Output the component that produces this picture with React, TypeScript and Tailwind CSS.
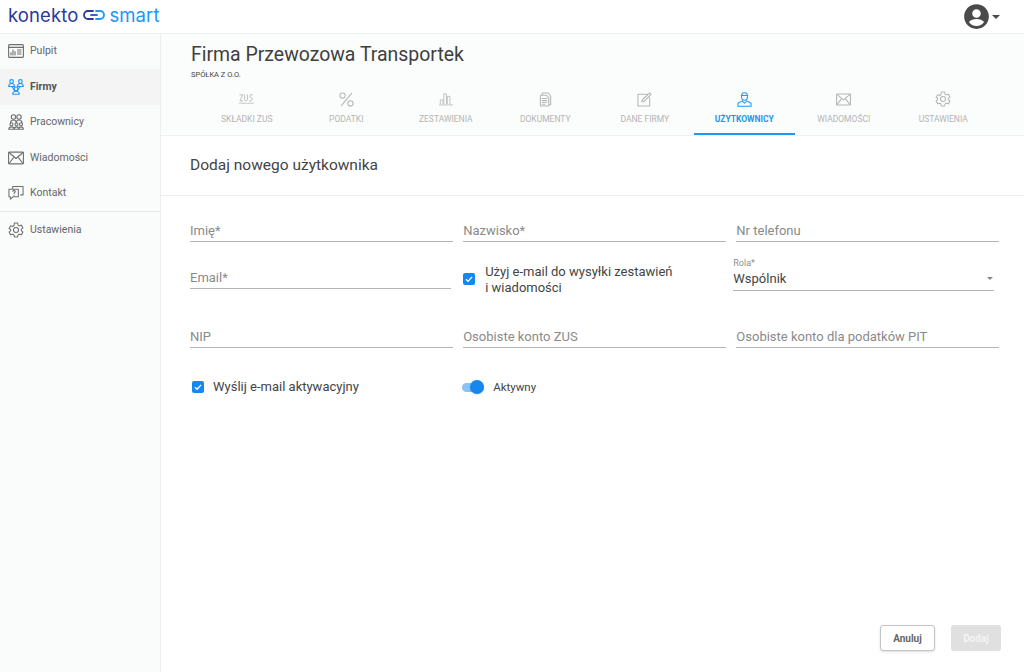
import React from "react";

type IconProps = { className?: string };

const base = { fill: "none", stroke: "currentColor", strokeWidth: 1.1, strokeLinecap: "round" as const, strokeLinejoin: "round" as const };

const Pulpit = ({ className }: IconProps) => (
  <svg viewBox="0 0 16 14" className={className} {...base}>
    <rect x="0.6" y="0.6" width="14.8" height="12.8" rx="1" />
    <path d="M0.6 3.4h14.8M3 11V8.5M5 11V6M7 11V7.5M9.5 6h3.5M9.5 8h3.5M9.5 10h3.5" />
  </svg>
);
const People = ({ className }: IconProps) => (
  <svg viewBox="0 0 16 16" className={className} {...base}>
    <circle cx="3.6" cy="2.4" r="1.8" />
    <circle cx="12.4" cy="2.4" r="1.8" />
    <circle cx="8" cy="9.8" r="1.8" />
    <path d="M.7 7.500c0-2 1-3 2.900-3s2.900 1 2.900 3zM9.500 7.500c0-2 1-3 2.900-3s2.900 1 2.900 3zM4.700 15.300c0-2 1.300-3 3.300-3s3.300 1 3.300 3zM6.500 11.500L4 7.600M9.500 11.500L12 7.600" />
  </svg>
);
const Workers = ({ className }: IconProps) => (
  <svg viewBox="0 0 16 16" className={className} {...base}>
    <circle cx="5.500" cy="3" r="2.200" />
    <circle cx="11" cy="3" r="2.200" />
    <path d="M2.500 9c0-2 1.200-3 3-3s2.700 1 2.700 3M8.200 9c0-2 1-3 2.800-3s3 1 3 3" />
    <circle cx="3.500" cy="10.200" r="1.500" />
    <circle cx="8.500" cy="10.200" r="1.500" />
    <circle cx="13" cy="10.200" r="1.500" />
    <path d="M.8 15.300c0-1.500 1-2.400 2.700-2.400s2.700.9 2.700 2.400zM6.200 15.300c0-1.500.9-2.400 2.300-2.400s2.300.9 2.300 2.400zM10.800 15.300c0-1.500.8-2.400 2.200-2.400s2.300.9 2.300 2.400z" />
  </svg>
);
const Mail = ({ className }: IconProps) => (
  <svg viewBox="0 0 16 13" className={className} {...base}>
    <rect x="0.6" y="0.6" width="14.8" height="11.8" rx="0.8" />
    <path d="M1 1l7 6 7-6M1 12l5-6.400M15 12l-5-6.400" />
  </svg>
);
const Contact = ({ className }: IconProps) => (
  <svg viewBox="0 0 17 16" className={className} {...base}>
    <path d="M5 3V1h11v9h-2.500M5 4H1v8h1.500v2.600L5.500 12H11V4z" />
    <path d="M5 6.200c.5-1 2.500-1 2.700.2.1.9-1.200 1.100-1.200 2.100M6.500 10.200v.1" />
  </svg>
);
const Gear = ({ className }: IconProps) => (
  <svg viewBox="0 0 24 24" className={className} fill="none" stroke="currentColor" strokeWidth={1.6} strokeLinejoin="round">
    <circle cx="12" cy="12" r="3.800" />
    <path d="M9.600 1.500h4.800l.7 3.200 1.800 1 3.100-1 2.400 4.200-2.400 2.200v1.800l2.400 2.200-2.400 4.200-3.100-1-1.800 1-.7 3.200H9.600l-.7-3.200-1.800-1-3.100 1-2.400-4.200 2.400-2.200v-1.800L1.600 9.900l2.400-4.200 3.100 1 1.800-1z" />
  </svg>
);
const Zus = ({ className }: IconProps) => (
  <svg viewBox="0 0 16 12" className={className} {...base} strokeWidth={0.9}>
    <path d="M1 1.500h3L1 8h3M6 1.500V6.500c0 2 3 2 3 0V1.500M14.500 1.500h-2c-1.500 0-1.500 3 .2 3 1.800 0 1.800 3.500 0 3.500H11M0.500 10.500c2-1 3 1 5 0s3 1 5 0 3 1 5 0" />
  </svg>
);
const Percent = ({ className }: IconProps) => (
  <svg viewBox="0 0 16 16" className={className} {...base}>
    <circle cx="3.800" cy="3.800" r="2.800" />
    <circle cx="12.200" cy="12.200" r="2.800" />
    <path d="M13.500 1.500L2.500 14.500" />
  </svg>
);
const Bars = ({ className }: IconProps) => (
  <svg viewBox="0 0 16 15" className={className} {...base} strokeWidth={0.9}>
    <path d="M1.500 13V8.500h3V13M5.500 13V1.500h3V13M9.500 13V4.500h3V13M.5 14.300h15" />
  </svg>
);
const Doc = ({ className }: IconProps) => (
  <svg viewBox="0 0 13 16" className={className} {...base}>
    <path d="M3 3V1h6l3 3v9.500h-2M1 3.500h6.500L10 6v9H1zM3 7h5M3 9h5M3 11h5M3 13h3" />
  </svg>
);
const Edit = ({ className }: IconProps) => (
  <svg viewBox="0 0 16 16" className={className} {...base}>
    <path d="M11 2.500H1v12.500h12.500V6M6 8l7.500-7 1.500 1.500L7.500 10l-2.500.5z" />
  </svg>
);
const Users = ({ className }: IconProps) => (
  <svg viewBox="0 0 16 16" className={className} {...base}>
    <path d="M4.800 4.500c0-2.300 1.300-3.800 3.200-3.800s3.200 1.500 3.200 3.800c0 2.500-1.300 4.300-3.200 4.300S4.800 7 4.800 4.500zM4.500 3.800h7M5.500 9.500L1 12v3.300h14V12l-4.500-2.500L8 12z" />
  </svg>
);

const Tab = ({ Icon, label, active, iconClass }: { Icon: React.FC<IconProps>; label: string; active?: boolean; iconClass: string }) => (
  <div className={`h-[55px] flex flex-col items-center border-b-2 ${active ? "w-[101.5px] -mx-[1px] border-[#2196f3] text-[#2196f3]" : "w-[99.5px] border-transparent text-[#b5b5b5]"}`}>
    <div className="h-[28px] mt-[5px] flex items-center justify-center">
      <Icon className={iconClass} />
    </div>
    <div className={`text-[8.500px] leading-[12px] ${active ? "font-bold" : ""}`}>{label}</div>
  </div>
);

const Side = ({ Icon, label, active }: { Icon: React.FC<IconProps>; label: string; active?: boolean }) => (
  <div className={`h-[35.5px] flex items-center pl-[8px] ${active ? "bg-[#f4f4f4]" : ""}`}>
    <div className={`w-[16px] flex justify-center ${active ? "text-[#2196f3]" : "text-[#6f6f6f]"}`}>
      <Icon className="w-[16px] h-[16px]" />
    </div>
    <span className={`ml-[6px] text-[10.500px] leading-none ${active ? "font-bold text-[#555]" : "text-[#666]"}`}>{label}</span>
  </div>
);

const Field = ({ label, className = "" }: { label: string; className?: string }) => (
  <div className={`h-[24px] pt-[2.5px] border-b border-[#b4b4b4] text-[13px] leading-[20px] text-[#8a8a8a] ${className}`}>{label}</div>
);

const Check = () => (
  <span className="w-[12px] h-[12px] rounded-[2px] bg-[#1488ee] flex items-center justify-center shrink-0">
    <svg viewBox="0 0 12 12" className="w-[10px] h-[10px]" fill="none" stroke="#fff" strokeWidth={1.600}>
      <path d="M2.300 6.200l2.600 2.500 4.800-5.200" />
    </svg>
  </span>
);

export default function App() {
  return (
    <div className="w-[1024px] h-[672px] overflow-hidden bg-white flex flex-col font-['Roboto',sans-serif]">
      <header className="h-[34px] shrink-0 flex items-center justify-between border-b border-[#f0f0f0] bg-white pl-[8px] pr-[24px] relative z-10">
        <div className="flex items-center font-['Inter',sans-serif] text-[18.500px] leading-none -mt-[3px]">
          <span className="text-[#2a3a9c] font-normal tracking-[0.1px]">konekto</span>
          <svg viewBox="0 0 22 10" className="w-[22px] h-[10px] ml-[5px]" fill="none" strokeWidth={1.800} strokeLinecap="round">
            <path d="M10 1H5a4 4 0 0 0 0 8h5" stroke="#2a3a9c" />
            <path d="M8 5h6" stroke="#2a6ac8" />
            <path d="M13 1h4a4 4 0 0 1 0 8h-4" stroke="#2196f3" />
          </svg>
          <span className="ml-[4px] text-[#2196f3] font-normal tracking-[0.1px]">smart</span>
        </div>
        <div className="flex items-center">
          <svg viewBox="0 0 24 24" className="w-[27px] h-[27px] text-[#4a4a4a]" fill="currentColor">
            <path d="M12 1C5.900 1 1 5.900 1 12s4.900 11 11 11 11-4.900 11-11S18.100 1 12 1zm0 4.500c2.100 0 3.800 1.700 3.800 3.800S14.100 13.100 12 13.100 8.200 11.400 8.200 9.300 9.900 5.500 12 5.500zm0 15c-2.800 0-5.300-1.400-6.700-3.600 1-1.700 4.400-2.600 6.700-2.600s5.700.9 6.700 2.600c-1.400 2.200-3.900 3.600-6.700 3.600z" />
          </svg>
          <span className="ml-[2px] w-0 h-0 border-x-[4.500px] border-x-transparent border-t-[4.500px] border-t-[#4a4a4a]" />
        </div>
      </header>
      <div className="flex flex-1 min-h-0">
        <aside className="w-[161px] shrink-0 bg-[#fafbfb] border-r border-[#eeeeee]">
          <div className="-mt-[0.5px]">
            <Side Icon={Pulpit} label="Pulpit" />
            <Side Icon={People} label="Firmy" active />
            <Side Icon={Workers} label="Pracownicy" />
            <Side Icon={Mail} label="Wiadomości" />
            <Side Icon={Contact} label="Kontakt" />
            <div className="border-t border-[#e8e8e8]" />
            <Side Icon={Gear} label="Ustawienia" />
          </div>
        </aside>
        <main className="flex-1 min-w-0 flex flex-col">
          <section className="h-[102px] shrink-0 bg-[#fbfcfc] border-b border-[#f0f0f0] relative">
            <h1 className="pl-[30px] pt-[8px] text-[19.450px] leading-[26px] text-[#3f3f3f]">Firma Przewozowa Transportek</h1>
            <div className="pl-[30px] mt-[2px] text-[7.500px] leading-[10px] text-[#444]">SPÓŁKA Z O.O.</div>
            <div className="flex pl-[36px]">
              <Tab Icon={Zus} label="SKŁADKI ZUS" iconClass="w-[15px] h-[12px]" />
              <Tab Icon={Percent} label="PODATKI" iconClass="w-[15px] h-[15px]" />
              <Tab Icon={Bars} label="ZESTAWIENIA" iconClass="w-[14px] h-[14px]" />
              <Tab Icon={Doc} label="DOKUMENTY" iconClass="w-[13px] h-[15px]" />
              <Tab Icon={Edit} label="DANE FIRMY" iconClass="w-[15px] h-[15px]" />
              <Tab Icon={Users} label="UŻYTKOWNICY" iconClass="w-[15px] h-[15px]" active />
              <Tab Icon={Mail} label="WIADOMOŚCI" iconClass="w-[15px] h-[13px]" />
              <Tab Icon={Gear} label="USTAWIENIA" iconClass="w-[16px] h-[16px]" />
            </div>
          </section>
          <section className="flex-1 relative flex flex-col">
            <div className="h-[60px] shrink-0 border-b border-[#eeeeee] pl-[29px] pt-[19px] text-[15.500px] leading-[20px] text-[#444]">Dodaj nowego użytkownika</div>
            <div className="pl-[29px] pr-[24.500px] pt-[22px]">
              <div className="grid grid-cols-3 gap-x-[10px]">
                <Field label="Imię*" />
                <Field label="Nazwisko*" />
                <Field label="Nr telefonu" />
              </div>
              <div className="grid grid-cols-3 gap-x-[10px] h-[44px] mt-[17px]">
                <Field label="Email*" className="mt-[6px] mr-[2px]" />
                <div className="flex items-start pt-[5px]">
                  <div className="mt-[9px]"><Check /></div>
                  <div className="ml-[10px] text-[13px] leading-[15.500px] text-[#444]">Użyj e-mail do wysyłki zestawień<br />i wiadomości</div>
                </div>
                <div className="-ml-[3px] mr-[5px] -mt-[2px] h-[34px] border-b border-[#b4b4b4] relative">
                  <div className="text-[9px] leading-[10px] text-[#8f8f8f] pt-[1px]">Rola*</div>
                  <div className="text-[13px] leading-[18px] text-[#444] mt-[2px]">Wspólnik</div>
                  <span className="absolute right-[1px] top-[20px] w-0 h-0 border-x-[3.500px] border-x-transparent border-t-[3.500px] border-t-[#888]" />
                </div>
              </div>
              <div className="grid grid-cols-3 gap-x-[10px] mt-[21px]">
                <Field label="NIP" />
                <Field label="Osobiste konto ZUS" />
                <Field label="Osobiste konto dla podatków PIT" />
              </div>
              <div className="grid grid-cols-3 gap-x-[10px] mt-[30px] h-[18px] items-center">
                <div className="flex items-center pl-[2px]">
                  <Check />
                  <span className="ml-[9px] text-[13px] leading-[18px] text-[#444]">Wyślij e-mail aktywacyjny</span>
                </div>
                <div className="flex items-center -ml-[1px]">
                  <span className="relative w-[22px] h-[9px] rounded-full bg-[#8cc3f5]">
                    <span className="absolute right-0 top-[-3px] w-[14px] h-[14px] rounded-full bg-[#1488ee] shadow-sm" />
                  </span>
                  <span className="ml-[9px] text-[11.500px] leading-[18px] text-[#444]">Aktywny</span>
                </div>
              </div>
            </div>
            <div className="mt-auto mb-[21px] mr-[23px] flex justify-end gap-[16px] text-[10px] font-bold">
              <div className="w-[55px] h-[26px] rounded-[3px] border border-[#c4c4c4] bg-white text-[#666] flex items-center justify-center shadow-sm">Anuluj</div>
              <div className="w-[50px] h-[26px] rounded-[3px] bg-[#e0e0e0] text-[#f4f4f4] flex items-center justify-center">Dodaj</div>
            </div>
          </section>
        </main>
      </div>
    </div>
  );
}
